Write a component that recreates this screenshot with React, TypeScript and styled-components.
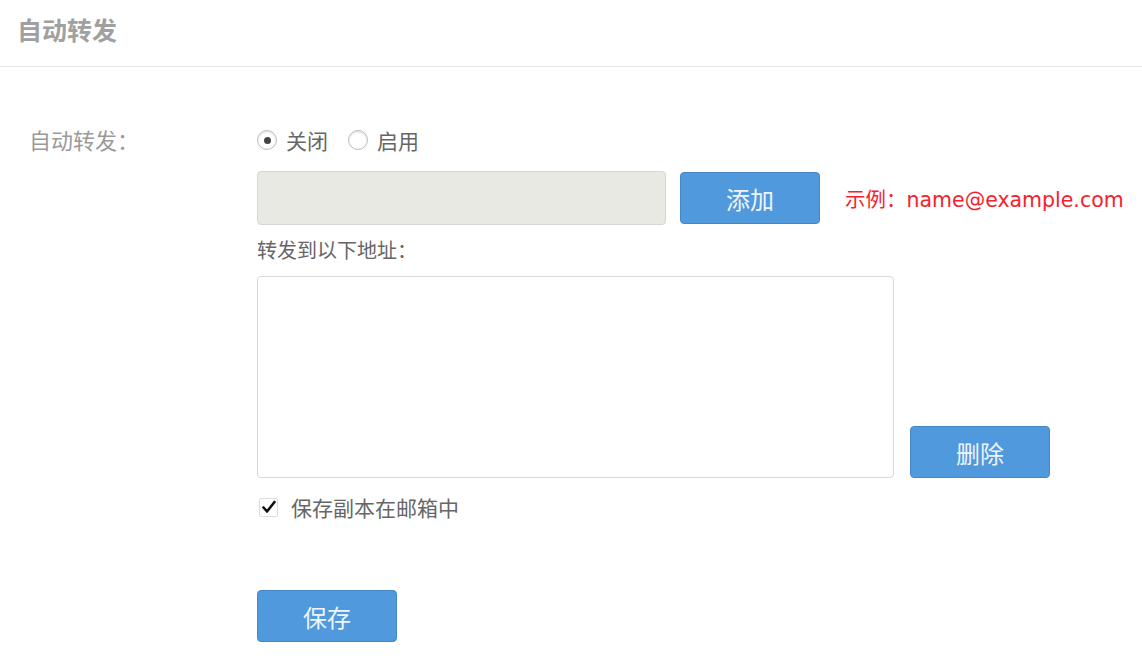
import React, { useState } from "react";
import styled, { createGlobalStyle } from "styled-components";

const GlobalStyle = createGlobalStyle`
  html, body {
    margin: 0;
    padding: 0;
    background: #ffffff;
  }
  body {
    font-family: "DejaVu Sans", "Noto Sans CJK SC", sans-serif;
    color: #666666;
  }
`;

const BLUE = "#5199dd";

const App: React.FC = () => {
  const [enabled, setEnabled] = useState(false);
  const [keepCopy, setKeepCopy] = useState(true);

  return (
    <>
      <GlobalStyle />
      <StyledHeader>
        <StyledTitle>自动转发</StyledTitle>
      </StyledHeader>
      <StyledForm>
        <StyledLabel>自动转发：</StyledLabel>
        <StyledContent>
          <StyledRadioRow>
            <StyledRadioOption onClick={() => setEnabled(false)}>
              <StyledRadio checked={!enabled} />
              关闭
            </StyledRadioOption>
            <StyledRadioOption onClick={() => setEnabled(true)}>
              <StyledRadio checked={enabled} />
              启用
            </StyledRadioOption>
          </StyledRadioRow>

          <StyledInputRow>
            <StyledInput disabled />
            <StyledButton>添加</StyledButton>
            <StyledHint>示例：name@example.com</StyledHint>
          </StyledInputRow>

          <StyledCaption>转发到以下地址：</StyledCaption>

          <StyledListRow>
            <StyledList />
            <StyledButton>删除</StyledButton>
          </StyledListRow>

          <StyledCheckRow onClick={() => setKeepCopy(!keepCopy)}>
            <StyledCheckbox>
              {keepCopy && (
                <svg width="16" height="16" viewBox="0 0 16 16">
                  <path
                    d="M2.5 8.5 L6 12.5 L13.5 3"
                    fill="none"
                    stroke="#111"
                    strokeWidth="2.6"
                    strokeLinecap="round"
                    strokeLinejoin="round"
                  />
                </svg>
              )}
            </StyledCheckbox>
            保存副本在邮箱中
          </StyledCheckRow>

          <StyledSaveRow>
            <StyledButton>保存</StyledButton>
          </StyledSaveRow>
        </StyledContent>
      </StyledForm>
    </>
  );
};

const StyledHeader = styled.div`
  height: 67px;
  box-sizing: border-box;
  border-bottom: 1px solid #e6e6e6;
  padding-left: 17px;
  display: flex;
  align-items: center;
  padding-bottom: 8px;
`;

const StyledTitle = styled.h1`
  margin: 0;
  font-size: 25px;
  font-weight: 700;
  color: #a0a0a0;
  font-family: "Noto Sans CJK SC", sans-serif;
`;

const StyledForm = styled.div`
  display: grid;
  grid-template-columns: 257px 1fr;
  padding-top: 58px;
`;

const StyledLabel = styled.div`
  padding-left: 29px;
  font-size: 22px;
  line-height: 28px;
  color: #9a9a9a;
  font-family: "Noto Sans CJK SC", sans-serif;
`;

const StyledContent = styled.div`
  display: flex;
  flex-direction: column;
`;

const StyledRadioRow = styled.div`
  display: flex;
  align-items: center;
  gap: 20px;
  height: 28px;
  margin-top: 1px;
  font-size: 21px;
  font-family: "Noto Sans CJK SC", sans-serif;
  color: #666;
`;

const StyledRadioOption = styled.label`
  display: flex;
  align-items: center;
  gap: 9px;
  cursor: pointer;
`;

const StyledRadio = styled.span<{ checked?: boolean }>`
  width: 20px;
  height: 20px;
  box-sizing: border-box;
  border-radius: 50%;
  border: 1px solid #bdbdbd;
  background: #fff;
  box-shadow: inset 0 1px 2px rgba(0, 0, 0, 0.15);
  display: flex;
  align-items: center;
  justify-content: center;
  &::after {
    content: "";
    width: 7px;
    height: 7px;
    border-radius: 50%;
    background: ${({ checked }) => (checked ? "#444" : "transparent")};
  }
`;

const StyledInputRow = styled.div`
  display: flex;
  align-items: center;
  margin-top: 17px;
`;

const StyledInput = styled.input`
  width: 409px;
  height: 54px;
  box-sizing: border-box;
  border: 1px solid #d6d6d2;
  border-radius: 4px;
  background: #e9e9e3;
  margin: 0 14px 0 0;
  padding: 0 10px;
`;

const StyledButton = styled.button`
  width: 140px;
  height: 52px;
  box-sizing: border-box;
  border: 1px solid #4687c8;
  border-radius: 4px;
  background: ${BLUE};
  color: #eef5fc;
  font-size: 24px;
  font-family: "Noto Sans CJK SC", sans-serif;
  padding: 0;
  cursor: pointer;
  flex-shrink: 0;
`;

const StyledHint = styled.span`
  margin-left: 25px;
  color: #f5222d;
  font-size: 20.5px;
  white-space: nowrap;
`;

const StyledCaption = styled.div`
  margin-top: 10px;
  font-size: 20px;
  line-height: 30px;
  font-family: "Noto Sans CJK SC", sans-serif;
  color: #666;
`;

const StyledListRow = styled.div`
  display: flex;
  align-items: flex-end;
  gap: 16px;
  margin-top: 11px;
`;

const StyledList = styled.div`
  width: 637px;
  height: 202px;
  box-sizing: border-box;
  border: 1px solid #d9d9d9;
  border-radius: 4px;
  background: #fff;
`;

const StyledCheckRow = styled.label`
  display: flex;
  align-items: center;
  gap: 13px;
  margin-top: 16px;
  height: 26px;
  font-size: 21px;
  font-family: "Noto Sans CJK SC", sans-serif;
  color: #666;
  cursor: pointer;
`;

const StyledCheckbox = styled.span`
  width: 19px;
  height: 19px;
  margin-left: 2px;
  box-sizing: border-box;
  border: 1px solid #dcdcdc;
  border-radius: 2px;
  background: #fff;
  display: flex;
  align-items: center;
  justify-content: center;
`;

const StyledSaveRow = styled.div`
  margin-top: 70px;
`;

export default App;
